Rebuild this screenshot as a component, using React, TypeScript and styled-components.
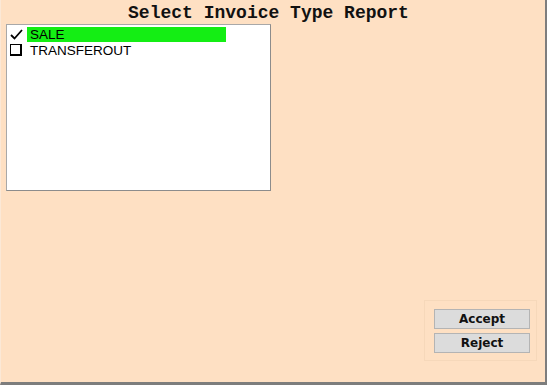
import React, { useState } from 'react'
import styled, { createGlobalStyle } from 'styled-components'

const GlobalStyle = createGlobalStyle`
    html, body {
        margin: 0;
        padding: 0;
        background: #fee0c3;
    }
`

const Window = styled.div`
    box-sizing: border-box;
    width: 547px;
    height: 385px;
    display: flex;
    flex-direction: column;
    background: #fee0c3;
    border-left: 1px solid #fbe8d6;
    border-right: 2px solid #7d7d7d;
    border-bottom: 3px solid #7d7d7d;
    padding: 0 8px 0 5px;
`

const Title = styled.h1`
    margin: 0;
    height: 23px;
    line-height: 26px;
    padding-right: 6px;
    text-align: center;
    font-family: "Liberation Mono", "Courier New", monospace;
    font-weight: bold;
    font-size: 18px;
    color: #111;
`

const Main = styled.div`
    flex: 1;
    display: flex;
    justify-content: space-between;
    align-items: flex-start;
    padding-bottom: 21px;
`

const ListBox = styled.ul`
    box-sizing: border-box;
    width: 265px;
    height: 167px;
    margin: 1px 0 0;
    padding: 1px 0 0 3px;
    list-style: none;
    background: #fff;
    border: 1px solid #8c8c8c;
    border-top-color: #a8a8a8;
    border-left-color: #a8a8a8;
`

const Row = styled.li`
    display: flex;
    align-items: center;
    height: 16px;
    cursor: pointer;
`

const Mark = styled.span`
    width: 17px;
    height: 16px;
    display: flex;
    align-items: center;
    justify-content: flex-start;
`

const Box = styled.span`
    box-sizing: border-box;
    width: 12px;
    height: 12px;
    border: 1px solid #000;
    border-right-width: 2px;
    border-bottom-width: 2px;
    background: #fff;
`

const Label = styled.span<{ $selected: boolean }>`
    box-sizing: border-box;
    width: 199px;
    height: 15px;
    line-height: 15px;
    padding-left: 3px;
    font-family: "Liberation Sans", Arial, sans-serif;
    font-size: 13.5px;
    color: #000;
    background: ${p => (p.$selected ? '#14ee14' : 'transparent')};
`

const ButtonPanel = styled.div`
    align-self: flex-end;
    display: flex;
    flex-direction: column;
    gap: 4px;
    padding: 8px 6px 7px 9px;
    border: 1px solid #f6d8ba;
`

const Button = styled.button`
    box-sizing: border-box;
    width: 96px;
    height: 20px;
    padding: 0;
    border: 1px solid #b4b4b4;
    background: #dcdcdc;
    font-family: "DejaVu Sans", Verdana, sans-serif;
    font-weight: bold;
    font-size: 12px;
    color: #111;
    cursor: pointer;
`

const Check = () => (
    <svg width="13" height="11" viewBox="0 0 13 11">
        <path d="M1 6 L4.5 9.5 L12 1" fill="none" stroke="#000" strokeWidth="1.8" />
    </svg>
)

const types = ['SALE', 'TRANSFEROUT']

export default function App() {
    const [checked, setChecked] = useState<string[]>(['SALE'])

    const toggle = (t: string) => {
        setChecked(checked.includes(t) ? checked.filter(c => c !== t) : [...checked, t])
    }

    return (
        <Window>
            <GlobalStyle />
            <Title>Select Invoice Type Report</Title>
            <Main>
                <ListBox>
                    {types.map(t => (
                        <Row key={t} onClick={() => toggle(t)}>
                            <Mark>{checked.includes(t) ? <Check /> : <Box />}</Mark>
                            <Label $selected={checked.includes(t)}>{t}</Label>
                        </Row>
                    ))}
                </ListBox>
                <ButtonPanel>
                    <Button>Accept</Button>
                    <Button>Reject</Button>
                </ButtonPanel>
            </Main>
        </Window>
    )
}
